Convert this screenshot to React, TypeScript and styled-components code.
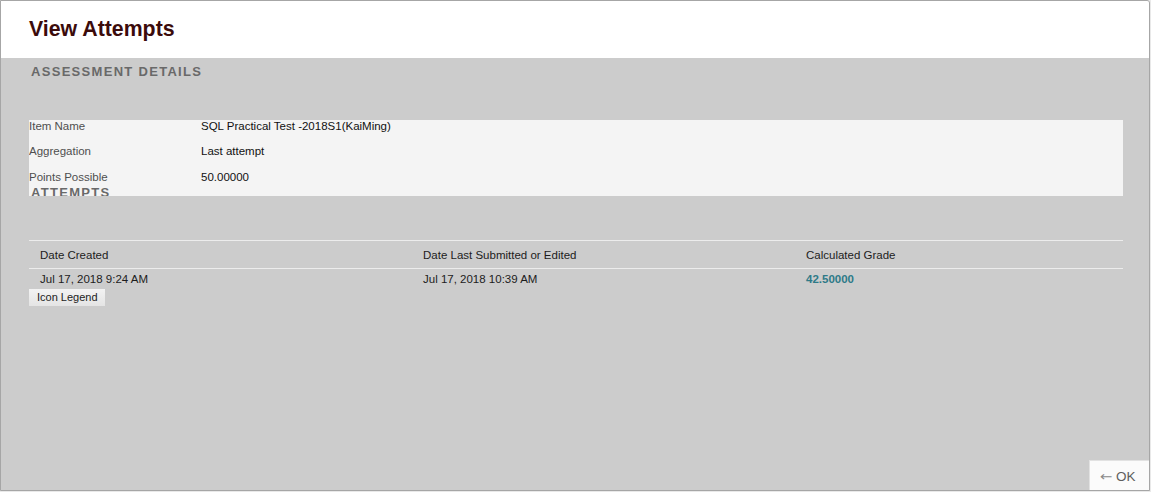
import React from "react";
import styled, { createGlobalStyle } from "styled-components";

const Global = createGlobalStyle`
  html, body { margin: 0; padding: 0; background: #e9e9e9; }
  body { font-family: "Liberation Sans", Arial, sans-serif; }
`;

const Frame = styled.div`
  box-sizing: border-box;
  width: 1150px;
  height: 491px;
  border: 1px solid #a6a6a6;
  border-top-right-radius: 3px;
  display: flex;
  flex-direction: column;
  background: #cccccc;
  overflow: hidden;
`;

const Header = styled.header`
  height: 57px;
  flex: none;
  background: #ffffff;
  display: flex;
  align-items: center;
  padding: 0 0 0 28px;
`;

const Title = styled.h1`
  margin: 0;
  margin-top: -1px;
  font-size: 21.3px;
  font-weight: bold;
  color: #3b0b0b;
  line-height: 24px;
`;

const Body = styled.main`
  flex: 1;
  display: flex;
  flex-direction: column;
  padding: 6px 26px 0 28px;
  min-height: 0;
`;

const SectionHeading = styled.h2`
  margin: 0;
  font-size: 13px;
  line-height: 15px;
  font-weight: bold;
  letter-spacing: 1.3px;
  color: #696969;
  padding-left: 2px;
`;

const DetailsPanel = styled.div`
  margin-top: 41px;
  height: 76px;
  background: #f4f4f4;
  overflow: hidden;
`;

const DetailRow = styled.div<{ $h: number }>`
  display: grid;
  grid-template-columns: 172px 1fr;
  height: ${(p) => p.$h}px;
  font-size: 11.5px;
  line-height: 13px;
`;

const Label = styled.span`
  color: #4f4f4f;
`;

const Value = styled.span`
  color: #111111;
`;

const AttemptsTable = styled.div`
  margin-top: 44px;
  border-top: 1px solid #ececec;
  font-size: 11.5px;
  line-height: 14px;
  color: #1c1c1c;
`;

const TRow = styled.div<{ $head?: boolean }>`
  display: grid;
  grid-template-columns: 383px 383px 1fr;
  height: ${(p) => (p.$head ? 27 : 19)}px;
  align-items: center;
  border-bottom: ${(p) => (p.$head ? "1px solid #ececec" : "none")};
`;

const Cell = styled.span<{ $grade?: boolean }>`
  padding-left: 11px;
  font-weight: ${(p) => (p.$grade ? "bold" : "normal")};
  color: ${(p) => (p.$grade ? "#2e7a88" : "inherit")};
`;

const LegendButton = styled.button`
  align-self: flex-start;
  margin: 1px 0 0 0;
  padding: 0 7px 0 8px;
  height: 17px;
  border: none;
  background: linear-gradient(#f3f3f3, #e4e4e4);
  font-family: "Liberation Sans", Arial, sans-serif;
  font-size: 11px;
  color: #222;
  line-height: 17px;
  cursor: pointer;
`;

const Footer = styled.div`
  margin-top: auto;
  display: flex;
  justify-content: flex-end;
  margin-right: -26px;
`;

const OkButton = styled.button`
  width: 60px;
  height: 30px;
  border: none;
  border-left: 1px solid #e2e2e2;
  border-top: 1px solid #e2e2e2;
  background: #fbfbfb;
  color: #5e5e5e;
  font-family: "Liberation Sans", Arial, sans-serif;
  font-size: 13.5px;
  padding: 2px 0 0 10px;
  display: flex;
  align-items: center;
  justify-content: flex-start;
  gap: 5px;
  cursor: pointer;
`;

const Arrow = styled.span`
  display: inline-block;
  font-family: "DejaVu Sans", sans-serif;
  font-size: 13px;
  color: #8a8a8a;
  transform: scaleX(1.15);
  transform-origin: left center;
`;

export default function App() {
  return (
    <>
      <Global />
      <Frame>
        <Header>
          <Title>View Attempts</Title>
        </Header>
        <Body>
          <SectionHeading>ASSESSMENT DETAILS</SectionHeading>
          <DetailsPanel>
            <DetailRow $h={25}>
              <Label>Item Name</Label>
              <Value>SQL Practical Test -2018S1(KaiMing)</Value>
            </DetailRow>
            <DetailRow $h={26}>
              <Label>Aggregation</Label>
              <Value>Last attempt</Value>
            </DetailRow>
            <DetailRow $h={14}>
              <Label>Points Possible</Label>
              <Value>50.00000</Value>
            </DetailRow>
            <SectionHeading>ATTEMPTS</SectionHeading>
          </DetailsPanel>
          <AttemptsTable>
            <TRow $head>
              <Cell>Date Created</Cell>
              <Cell>Date Last Submitted or Edited</Cell>
              <Cell>Calculated Grade</Cell>
            </TRow>
            <TRow>
              <Cell>Jul 17, 2018 9:24 AM</Cell>
              <Cell>Jul 17, 2018 10:39 AM</Cell>
              <Cell $grade>42.50000</Cell>
            </TRow>
          </AttemptsTable>
          <LegendButton>Icon Legend</LegendButton>
          <Footer>
            <OkButton>
              <Arrow>←</Arrow>
              <span>OK</span>
            </OkButton>
          </Footer>
        </Body>
      </Frame>
    </>
  );
}
